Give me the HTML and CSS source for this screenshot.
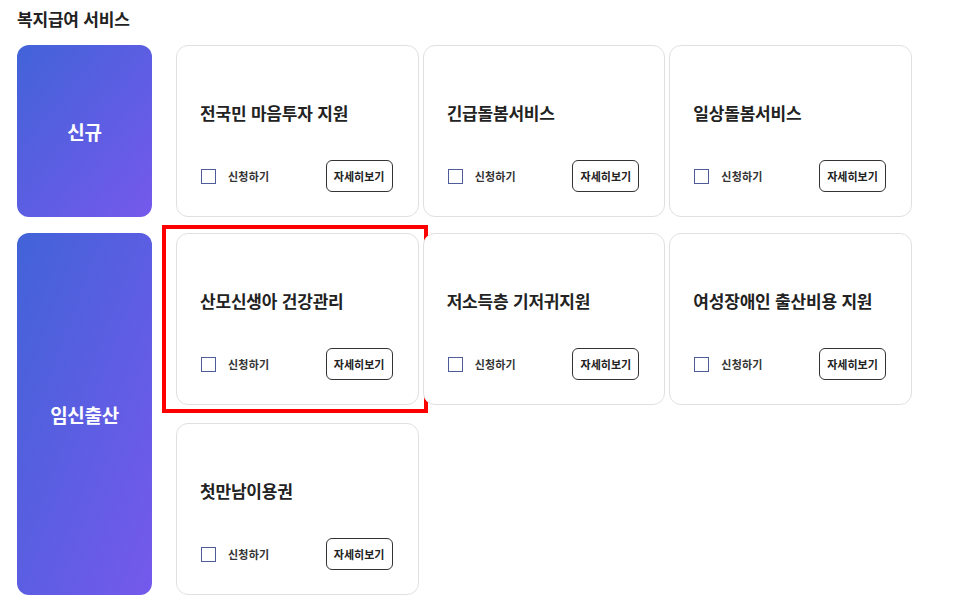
FILE: index.html
```html
<!DOCTYPE html>
<html lang="ko">
<head>
<meta charset="utf-8">
<title>복지급여 서비스</title>
<link rel="stylesheet" href="styles.css">
</head>
<body>
<main class="page">
  <h2 class="page-title">복지급여 서비스</h2>
  <div class="groups">
    <section class="group">
      <div class="category category-short">신규</div>
      <div class="cards">
        <article class="card">
          <div class="card-title">전국민 마음투자 지원</div>
          <div class="card-foot">
            <label class="apply"><span class="check"></span>신청하기</label>
            <button class="detail-btn">자세히보기</button>
          </div>
        </article>
        <article class="card">
          <div class="card-title">긴급돌봄서비스</div>
          <div class="card-foot">
            <label class="apply"><span class="check"></span>신청하기</label>
            <button class="detail-btn">자세히보기</button>
          </div>
        </article>
        <article class="card">
          <div class="card-title">일상돌봄서비스</div>
          <div class="card-foot">
            <label class="apply"><span class="check"></span>신청하기</label>
            <button class="detail-btn">자세히보기</button>
          </div>
        </article>
      </div>
    </section>
    <section class="group">
      <div class="category">임신출산</div>
      <div class="cards">
        <article class="card card-highlight">
          <div class="card-title">산모신생아 건강관리</div>
          <div class="card-foot">
            <label class="apply"><span class="check"></span>신청하기</label>
            <button class="detail-btn">자세히보기</button>
          </div>
        </article>
        <article class="card">
          <div class="card-title">저소득층 기저귀지원</div>
          <div class="card-foot">
            <label class="apply"><span class="check"></span>신청하기</label>
            <button class="detail-btn">자세히보기</button>
          </div>
        </article>
        <article class="card">
          <div class="card-title">여성장애인 출산비용 지원</div>
          <div class="card-foot">
            <label class="apply"><span class="check"></span>신청하기</label>
            <button class="detail-btn">자세히보기</button>
          </div>
        </article>
        <article class="card">
          <div class="card-title">첫만남이용권</div>
          <div class="card-foot">
            <label class="apply"><span class="check"></span>신청하기</label>
            <button class="detail-btn">자세히보기</button>
          </div>
        </article>
      </div>
    </section>
  </div>
</main>
</body>
</html>
```

FILE: styles.css
```css
* { box-sizing: border-box; }

html, body {
  margin: 0;
  padding: 0;
  background: #ffffff;
  overflow: hidden;
}

body {
  font-family: "Noto Sans CJK KR", "Noto Sans", sans-serif;
  color: #222222;
}

.page {
  padding: 8px 0 0 17px;
}

.page-title {
  margin: 0;
  font-size: 17px;
  line-height: 22px;
  font-weight: 700;
  letter-spacing: -0.2px;
  color: #222222;
}

.groups {
  margin-top: 15px;
  display: flex;
  flex-direction: column;
  gap: 16px;
}

.group {
  display: flex;
  gap: 24px;
  align-items: stretch;
}

.category {
  width: 135px;
  flex: none;
  border-radius: 12px;
  background: linear-gradient(to bottom right, #4263d8, #7559ec);
  color: #ffffff;
  font-size: 19px;
  font-weight: 700;
  letter-spacing: -0.3px;
  display: flex;
  align-items: center;
  justify-content: center;
}

.cards {
  width: 736px;
  display: grid;
  grid-template-columns: repeat(3, 1fr);
  column-gap: 4px;
  row-gap: 18px;
}

.card {
  position: relative;
  height: 172px;
  border: 1px solid #e0e0e0;
  border-radius: 12px;
  background: #ffffff;
  padding: 24px 24px 24px 23px;
  display: flex;
  flex-direction: column;
}

.card-highlight::after {
  content: "";
  position: absolute;
  left: -15px;
  top: -9px;
  right: -10px;
  bottom: -9px;
  border: 4px solid #ff0000;
  pointer-events: none;
}

.card-title {
  flex: 1;
  display: flex;
  align-items: center;
  padding-bottom: 6px;
  font-size: 17px;
  font-weight: 700;
  letter-spacing: -0.2px;
  color: #222222;
}

.card-foot {
  display: flex;
  align-items: center;
  justify-content: space-between;
  height: 32px;
}

.apply {
  display: flex;
  align-items: center;
  gap: 12px;
  font-size: 11px;
  font-weight: 700;
  color: #333333;
  letter-spacing: 0.2px;
  padding-left: 1px;
}

.check {
  width: 15px;
  height: 15px;
  border: 1.5px solid #4e5c99;
  background: #ffffff;
}

.detail-btn {
  width: 67px;
  height: 32px;
  border: 1px solid #333333;
  border-radius: 6px;
  background: #ffffff;
  font-family: inherit;
  font-size: 11px;
  font-weight: 700;
  color: #222222;
  letter-spacing: 0;
  padding: 0;
  margin-right: 1px;
}
```
